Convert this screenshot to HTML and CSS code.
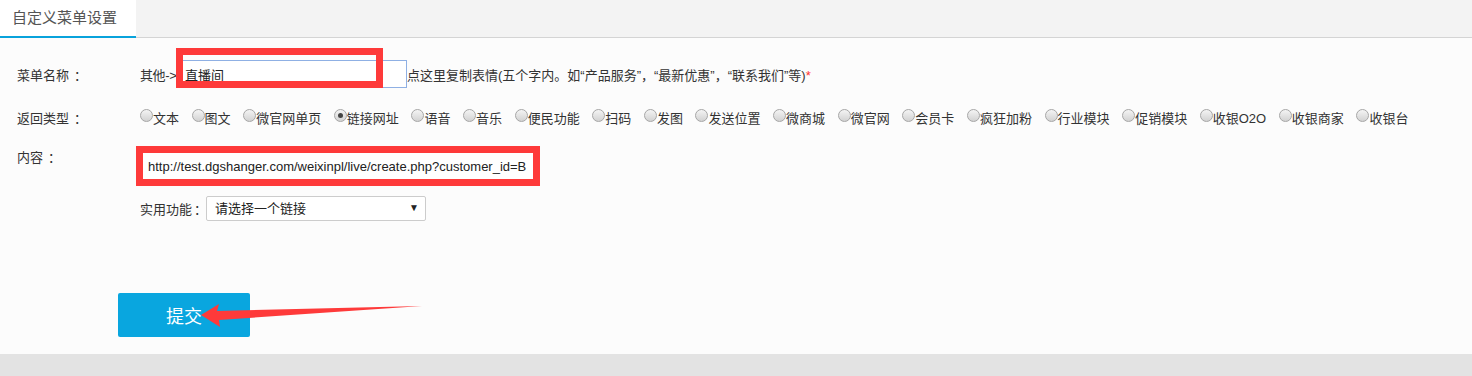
FILE: index.html
```html
<!DOCTYPE html>
<html lang="zh-CN">
<head>
  <meta charset="UTF-8" />
  <meta name="viewport" content="width=device-width, initial-scale=1.0">
  <title>自定义菜单设置</title>
  <link rel="stylesheet" href="styles.css">
</head>
<body>
  <div class="tabs">
    <div class="tab active">自定义菜单设置</div>
  </div>

  <div class="panel">
    <!-- 菜单名称 -->
    <div class="row row-name">
      <div class="label">菜单名称<span class="colon">：</span></div>
      <div class="field">
        <span class="prefix">其他-&gt;</span>
        <span class="mark-wrap">
          <input type="text" class="name-input" value="直播间">
          <span class="mark mark-name"></span>
        </span>
        <span class="hint">点这里复制表情(五个字内。如“产品服务”，“最新优惠”，“联系我们”等)<em>*</em></span>
      </div>
    </div>

    <!-- 返回类型 -->
    <div class="row row-type">
      <div class="label">返回类型<span class="colon">：</span></div>
      <div class="field radios">
        <label><input type="radio" name="type">文本</label>
        <label><input type="radio" name="type">图文</label>
        <label><input type="radio" name="type">微官网单页</label>
        <label><input type="radio" name="type" checked>链接网址</label>
        <label><input type="radio" name="type">语音</label>
        <label><input type="radio" name="type">音乐</label>
        <label><input type="radio" name="type">便民功能</label>
        <label><input type="radio" name="type">扫码</label>
        <label><input type="radio" name="type">发图</label>
        <label><input type="radio" name="type">发送位置</label>
        <label><input type="radio" name="type">微商城</label>
        <label><input type="radio" name="type">微官网</label>
        <label><input type="radio" name="type">会员卡</label>
        <label><input type="radio" name="type">疯狂加粉</label>
        <label><input type="radio" name="type">行业模块</label>
        <label><input type="radio" name="type">促销模块</label>
        <label><input type="radio" name="type">收银O2O</label>
        <label><input type="radio" name="type">收银商家</label>
        <label><input type="radio" name="type">收银台</label>
      </div>
    </div>

    <!-- 内容 -->
    <div class="row row-content">
      <div class="label">内容<span class="colon">：</span></div>
      <div class="field">
        <span class="mark-wrap">
          <input type="text" class="url-input" value="http://test.dgshanger.com/weixinpl/live/create.php?customer_id=B">
          <span class="mark mark-url"></span>
        </span>
      </div>
    </div>

    <div class="row row-func">
      <div class="label"></div>
      <div class="field">
        <span class="func-label">实用功能<span class="colon">：</span></span>
        <span class="select-wrap">
          <select class="func-select">
            <option>请选择一个链接</option>
          </select>
        </span>
      </div>
    </div>

    <div class="actions">
      <button class="submit">提交</button>
    </div>

    <!-- annotation arrow -->
    <svg class="arrow" width="230" height="32" viewBox="0 0 230 32">
      <polygon points="1,15 19,4 17,11 222,6 19,20 20,27" fill="#fe3a3a"/>
    </svg>
  </div>
</body>
</html>
```

FILE: styles.css
```css
body {
  margin: 0;
  background: #e3e3e3;
  font-family: "Liberation Sans", "Noto Sans CJK SC", sans-serif;
  font-size: 13px;
  color: #333;
}

.tabs {
  display: flex;
  height: 37px;
  background: #f3f3f3;
  border-bottom: 1px solid #d5d5d5;
}

.tab {
  width: 124px;
  padding-left: 12px;
  background: #fff;
  font-size: 15px;
  line-height: 35px;
  color: #555;
  border-bottom: 2px solid #09a3dc;
  margin-bottom: -1px;
}

.panel {
  position: relative;
  height: 316px;
  background: #fcfcfc;
  box-shadow: 0 3px 4px rgba(0,0,0,0.12);
}

.colon {
  padding-left: 5px;
}

.func-label .colon {
  padding-left: 2px;
}

.row {
  display: flex;
  align-items: center;
  padding-left: 17px;
}

.label {
  width: 123px;
  flex-shrink: 0;
}

.field {
  display: flex;
  align-items: center;
}

.row-name {
  padding-top: 22px;
  height: 28px;
}

.prefix {
  width: 36px;
  flex-shrink: 0;
  white-space: nowrap;
  letter-spacing: -0.4px;
}

.mark-wrap {
  position: relative;
  display: inline-block;
}

.name-input {
  box-sizing: border-box;
  width: 231px;
  height: 28px;
  border: 1px solid #8fb0e4;
  padding: 0 8px;
  font: inherit;
  color: #222;
  background: #fff;
  outline: none;
}

.hint em {
  font-style: normal;
  color: #f33;
}

.mark {
  position: absolute;
  border: 7px solid #fe3a3a;
  pointer-events: none;
}

.mark-name {
  left: 0;
  top: -12px;
  width: 193px;
  height: 26px;
}

.row-type {
  padding-top: 15px;
  height: 28px;
}

.radios {
  white-space: nowrap;
}

.radios label {
  display: flex;
  align-items: center;
  margin-right: 12.6px;
}

.radios input {
  -webkit-appearance: none;
  appearance: none;
  box-sizing: border-box;
  width: 13px;
  height: 13px;
  margin: -3px 0 0 0;
  border: 1px solid #a6a6a6;
  border-radius: 50%;
  background: linear-gradient(#f4f4f4, #d2d2d2);
  position: relative;
}

.radios input:checked::after {
  content: "";
  position: absolute;
  left: 3px;
  top: 3px;
  width: 5px;
  height: 5px;
  border-radius: 50%;
  background: #444;
}

.row-content {
  padding-top: 15px;
  align-items: flex-start;
}

.row-content .label {
  padding-top: 1px;
}

.row-content .field {
  padding-left: 2px;
  padding-top: 6px;
}

.url-input {
  box-sizing: border-box;
  width: 392px;
  height: 28px;
  border: 1px solid #ccc;
  padding: 0 5px;
  font: inherit;
  color: #222;
  background: #fff;
  outline: none;
}

.mark-url {
  left: -6px;
  top: -6px;
  width: 390px;
  height: 26px;
}

.row-func {
  padding-top: 16px;
}

.func-label {
  width: 66px;
  white-space: nowrap;
}

.select-wrap {
  position: relative;
  display: inline-block;
}

.select-wrap::after {
  content: "▼";
  position: absolute;
  right: 7px;
  top: 6px;
  font-size: 10px;
  color: #222;
  pointer-events: none;
}

.func-select {
  -webkit-appearance: none;
  appearance: none;
  box-sizing: border-box;
  width: 220px;
  height: 25px;
  border: 1px solid #ccc;
  border-radius: 2px;
  padding: 0 8px;
  font: inherit;
  color: #222;
  background: #fff;
}

.actions {
  padding: 72px 0 0 118px;
}

.submit {
  width: 132px;
  height: 44px;
  border: none;
  border-radius: 2px;
  background: #09a6df;
  color: #fff;
  font-family: "Noto Sans CJK SC", sans-serif;
  font-size: 18px;
}

.arrow {
  position: absolute;
  left: 200px;
  top: 262px;
}
```
